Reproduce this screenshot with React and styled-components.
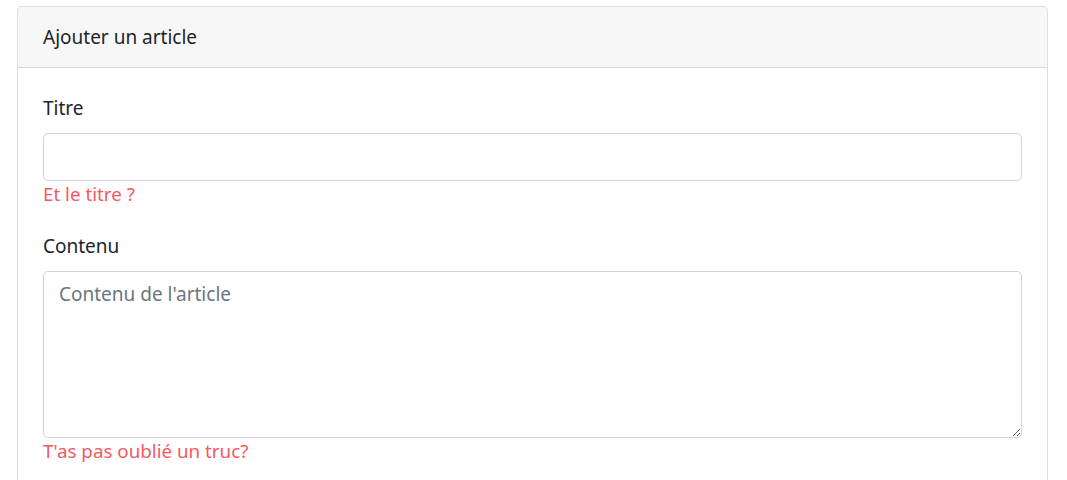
import React from "react";
import styled, { createGlobalStyle } from "styled-components";

const Global = createGlobalStyle`
  html, body { margin: 0; padding: 0; background: #fff; }
  body {
    font-family: "Segoe UI", "Noto Sans", "Open Sans", sans-serif;
    color: #212529;
  }
  * { box-sizing: border-box; }
`;

const Page = styled.div`
  padding: 6px 19px 0 17px;
`;

const Card = styled.div`
  border: 1px solid rgba(0, 0, 0, 0.125);
  border-radius: 5px;
  background: #fff;
  display: flex;
  flex-direction: column;
`;

const CardHeader = styled.div`
  background: rgba(0, 0, 0, 0.03);
  border-bottom: 1px solid rgba(0, 0, 0, 0.125);
  padding: 15px 25px;
  font-size: 19px;
  line-height: 30px;
  border-radius: 4px 4px 0 0;
`;

const CardBody = styled.form`
  padding: 25px;
  display: flex;
  flex-direction: column;
  gap: 25px;
`;

const Group = styled.div`
  display: flex;
  flex-direction: column;
`;

const Label = styled.label`
  font-size: 19px;
  line-height: 30px;
  margin-bottom: 10px;
`;

const fieldStyles = `
  width: 100%;
  border: 1px solid #ced4da;
  border-radius: 5px;
  padding: 7px 15px;
  font-family: inherit;
  font-size: 19px;
  line-height: 30px;
  color: #495057;
  background: #fff;
  &::placeholder { color: #6c757d; opacity: 1; }
`;

const Input = styled.input`
  ${fieldStyles}
  height: 48px;
  display: block;
`;

const TextArea = styled.textarea`
  ${fieldStyles}
  height: 167px;
  display: block;
  margin: 0;
`;

const Error = styled.div`
  color: #f9585f;
  font-size: 18.8px;
  line-height: 25px;
  padding-top: 1px;
  margin-bottom: -1px;
`;

export default function App() {
  return (
    <>
      <Global />
      <Page>
        <Card>
          <CardHeader>Ajouter un article</CardHeader>
          <CardBody onSubmit={(e) => e.preventDefault()}>
            <Group>
              <Label htmlFor="titre">Titre</Label>
              <Input id="titre" type="text" />
              <Error>Et le titre ?</Error>
            </Group>
            <Group>
              <Label htmlFor="contenu">Contenu</Label>
              <TextArea id="contenu" rows={5} placeholder="Contenu de l'article" />
              <Error>T'as pas oublié un truc?</Error>
            </Group>
          </CardBody>
        </Card>
      </Page>
    </>
  );
}
